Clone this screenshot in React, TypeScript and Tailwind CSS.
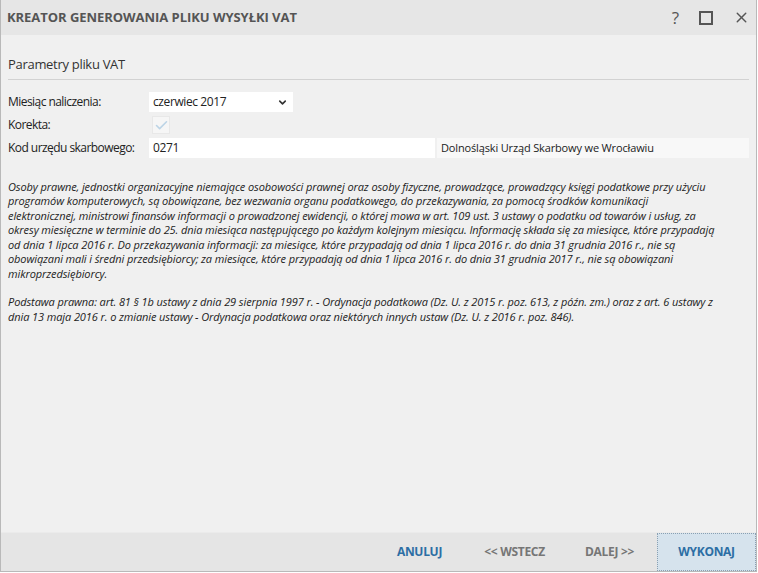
import { ChevronDown, Check, X } from "lucide-react";

const font = { fontFamily: '"Open Sans", "Noto Sans", sans-serif' };

function Row({ label, children }: any) {
  return (
    <div className="flex items-center h-[23px]">
      <div className="w-[141px] shrink-0 text-[12px] text-[#222] tracking-[-0.55px]">{label}</div>
      {children}
    </div>
  );
}

export default function App() {
  return (
    <div
      style={font}
      className="w-[758px] h-[573px] bg-white flex flex-col overflow-hidden"
    >
      <div className="w-[757px] h-[572px] flex flex-col bg-[#f0f0f0] border-l border-r border-b border-[#b9b9b9]">
        {/* title bar */}
        <div className="h-[35px] shrink-0 bg-[#e6e6e6] flex items-center pl-[6px] pr-[6px]">
          <div className="text-[13px] font-bold text-[#555] tracking-[-0.05px] flex-1">
            KREATOR GENEROWANIA PLIKU WYSYŁKI VAT
          </div>
          <div className="flex items-center gap-[20px] text-[#555]">
            <span className="text-[17px] leading-none">?</span>
            <span className="w-[14px] h-[14px] border-2 border-[#555]" />
            <X size={17} strokeWidth={2} />
          </div>
        </div>

        <div className="flex-1 flex flex-col px-[7px]">
          <div className="mt-[20px] text-[13px] text-[#333] tracking-[-0.3px] pb-[4px] border-b border-[#d2d2d2]">
            Parametry pliku VAT
          </div>

          <div className="mt-[11px] flex flex-col">
            <Row label="Miesiąc naliczenia:">
              <div className="w-[144px] h-[20px] bg-white flex items-center justify-between pl-[4px] pr-[5px] text-[12px] text-[#222] tracking-[-0.4px]">
                <span>czerwiec 2017</span>
                <ChevronDown size={11} strokeWidth={3.5} className="text-[#333]" />
              </div>
            </Row>
            <Row label="Korekta:">
              <div className="ml-[3px] w-[18px] h-[18px] bg-[#f6f6f6] border border-[#e8e8e8] flex items-center justify-center">
                <Check size={15} strokeWidth={2.5} className="text-[#bcd4e6]" />
              </div>
            </Row>
            <Row label="Kod urzędu skarbowego:">
              <div className="w-[286px] h-[20px] bg-white flex items-center pl-[4px] text-[12px] text-[#222] tracking-[-0.4px]">
                0271
              </div>
              <div className="ml-[2px] flex-1 h-[20px] bg-[#f8f8f8] flex items-center pl-[4px] text-[11px] text-[#222] tracking-[-0.15px]">
                Dolnośląski Urząd Skarbowy we Wrocławiu
              </div>
            </Row>
          </div>

          <div className="mt-[20px] text-[11px] italic leading-[14.5px] text-[#222] tracking-[-0.1px] pr-[6px]">
            <p>
              Osoby prawne, jednostki organizacyjne niemające osobowości prawnej oraz osoby fizyczne, prowadzące, prowadzący księgi podatkowe przy użyciu
              <br />
              programów komputerowych, są obowiązane, bez wezwania organu podatkowego, do przekazywania, za pomocą środków komunikacji
              <br />
              elektronicznej, ministrowi finansów informacji o prowadzonej ewidencji, o której mowa w art. 109 ust. 3 ustawy o podatku od towarów i usług, za
              <br />
              okresy miesięczne w terminie do 25. dnia miesiąca następującego po każdym kolejnym miesiącu. Informację składa się za miesiące, które przypadają
              <br />
              od dnia 1 lipca 2016 r. Do przekazywania informacji: za miesiące, które przypadają od dnia 1 lipca 2016 r. do dnia 31 grudnia 2016 r., nie są
              <br />
              obowiązani mali i średni przedsiębiorcy; za miesiące, które przypadają od dnia 1 lipca 2016 r. do dnia 31 grudnia 2017 r., nie są obowiązani
              <br />
              mikroprzedsiębiorcy.
            </p>
            <p className="mt-[14px]">
              Podstawa prawna: art. 81 § 1b ustawy z dnia 29 sierpnia 1997 r. - Ordynacja podatkowa (Dz. U. z 2015 r. poz. 613, z późn. zm.) oraz z art. 6 ustawy z
              <br />
              dnia 13 maja 2016 r. o zmianie ustawy - Ordynacja podatkowa oraz niektórych innych ustaw (Dz. U. z 2016 r. poz. 846).
            </p>
          </div>
        </div>

        {/* footer */}
        <div className="h-[39px] shrink-0 bg-[#e5e5e5] border-t border-[#ebebeb] flex items-stretch justify-end text-[12px] font-bold tracking-[-0.3px]">
          <div className="w-[95px] flex items-center justify-center text-[#2c6ea4]">ANULUJ</div>
          <div className="w-[95px] flex items-center justify-center text-[#767676]">&lt;&lt; WSTECZ</div>
          <div className="w-[95px] flex items-center justify-center text-[#767676]">DALEJ &gt;&gt;</div>
          <div className="w-[99px] flex items-center justify-center bg-[#d6e3ed] border border-dotted border-[#8aa0b2] text-[#2c6ea4]">
            WYKONAJ
          </div>
        </div>
      </div>
    </div>
  );
}
